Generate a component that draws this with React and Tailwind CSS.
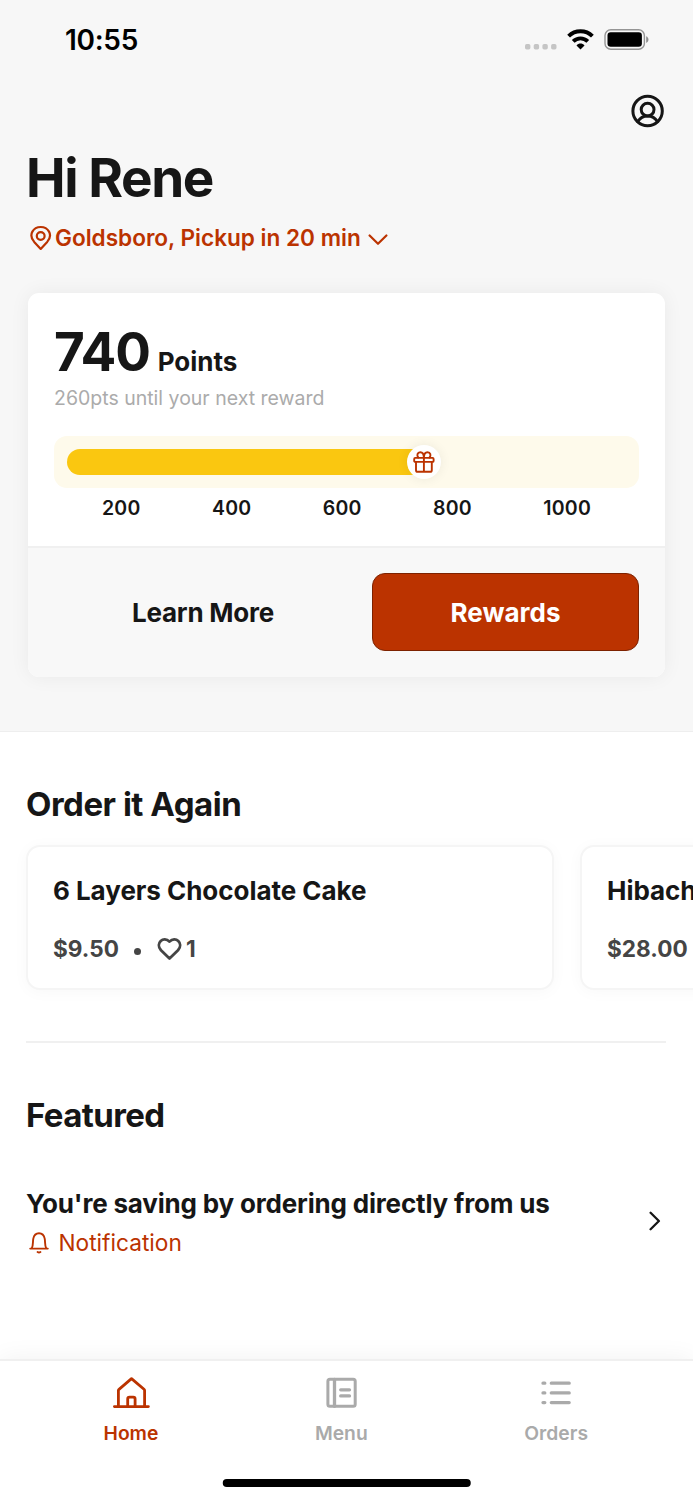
const INK = '#161616';
const BRAND = '#bb3300';

const MILESTONES = [200, 400, 600, 800, 1000];

const RECENT_ITEMS = [
  { name: '6 Layers Chocolate Cake', price: '$9.50', likes: 1 },
  { name: 'Hibachi Chicken', price: '$28.00', likes: 1 },
];

function Icon({ width, height, color, stroke, children, className = '' }) {
  return (
    <svg
      width={width}
      height={height}
      viewBox={`0 0 ${width} ${height}`}
      fill="none"
      stroke={color}
      strokeWidth={stroke}
      strokeLinecap="round"
      strokeLinejoin="round"
      className={`block flex-shrink-0 ${className}`}
    >
      {children}
    </svg>
  );
}

function StatusBar() {
  return (
    <div className="flex h-20 items-center justify-between pl-[65px] pr-[44px]">
      <span className="text-[28px] font-semibold leading-none tracking-[-0.3px] text-black">10:55</span>
      <div className="flex items-center">
        <Icon width={32} height={6} className="mt-[13px]">
          {[0, 8.7, 17.4, 26.1].map((x) => (
            <rect key={x} x={x} y="0" width="5.4" height="5.4" rx="1.7" fill="#c5c5c5" />
          ))}
        </Icon>
        {/* Wifi */}
        <Icon width={27} height={21} color="#000" className="ml-[10px] mt-[-1px]">
          <path d="M1.6 7.1C8.2 0.7 18.8 0.7 25.4 7.1" strokeWidth="4" strokeLinecap="butt" />
          <path d="M6.2 12.4C10.3 8.3 16.7 8.3 20.8 12.4" strokeWidth="3.9" strokeLinecap="butt" />
          <path d="M13.5 20.4L9.5 16.4C11.8 14 15.2 14 17.5 16.4Z" fill="#000" stroke="none" />
        </Icon>
        {/* Battery */}
        <Icon width={45} height={21} className="ml-[10px] mt-[-1px]">
          <rect x="1" y="0.8" width="39.4" height="19.4" rx="5.8" stroke="#959595" strokeWidth="1.4" />
          <rect x="3.5" y="3.2" width="34.4" height="14.6" rx="3.2" fill="#000" />
          <path d="M42.2 7.2C45.2 8.4 45.2 12.8 42.2 14Z" fill="#8e8e8e" />
        </Icon>
      </div>
    </div>
  );
}

function PointsCard() {
  return (
    <div className="ml-[1px] h-[384px] w-[637px] overflow-hidden rounded-[11px] bg-white shadow-[0_0_20px_rgba(0,0,0,0.06)]">
      <div className="h-[255px] border-b-2 border-[#f0f0f0] px-[26px] pt-[27px]">
        <div className="flex h-[64px] items-baseline gap-[8px]">
          <span className="text-[53px] font-bold leading-[64px] tracking-[-1.2px]">740</span>
          <span className="text-[26px] font-bold">Points</span>
        </div>
        <p className="h-[28px] text-[19.5px] leading-[28px] text-[#ababab]">260pts until your next reward</p>
        <div className="mt-[24px] flex h-[52px] items-center rounded-[13px] bg-[#fefaeb] pl-[12.5px]">
          <div className="relative h-[26px] w-[357px] rounded-full bg-[#fac710]">
            <div className="absolute -top-[4px] right-[-17px] flex h-[34px] w-[34px] items-center justify-center rounded-full bg-white shadow-[0_0_12px_rgba(0,0,0,0.07)]">
              <Icon width={22} height={22} color={BRAND} stroke={1.9}>
                <rect x="1.2" y="6.9" width="19.4" height="4" rx="1" />
                <path d="M3 10.9V19.2Q3 20.8 4.6 20.8H17.2Q18.8 20.8 18.8 19.2V10.9M10.9 6.7V20.8" />
                <path d="M10.9 6.5C10.8 3.2 9.4 1.2 7.3 1.2C4.3 1.2 3.5 4.6 5.3 6.5M10.9 6.5C11 3.2 12.4 1.2 14.5 1.2C17.5 1.2 18.3 4.6 16.5 6.5" />
              </Icon>
            </div>
          </div>
        </div>
        <div className="mt-[6px] flex justify-between px-[48px] text-[19.5px] font-semibold leading-[28px] tracking-[0.2px]">
          {MILESTONES.map((value) => (
            <span key={value}>{value}</span>
          ))}
        </div>
      </div>
      <div className="flex h-[129px] items-start bg-[#f8f8f8] px-[26px] pt-[25px] text-[26px]">
        <button className="h-[78px] flex-1 pr-[20px] pt-[1px] font-bold tracking-[-0.22px]">Learn More</button>
        <button className="h-[78px] w-[267px] rounded-[13px] border-[1.5px] border-[#7d2200] bg-[#bb3300] pt-[1px] font-bold text-white">
          Rewards
        </button>
      </div>
    </div>
  );
}

function OrderCard({ item }) {
  return (
    <div className="h-[145px] w-[528px] flex-shrink-0 rounded-[14px] border-2 border-[#f5f5f5] bg-white px-[25px] pt-[27px] shadow-[0_2px_16px_rgba(0,0,0,0.03)]">
      <h3 className="whitespace-nowrap text-[26px] font-bold leading-[34px] tracking-[-0.04px]">{item.name}</h3>
      <div className="mt-[26px] flex h-[30px] items-center text-[22.6px] font-bold leading-[30px] text-[#454545]">
        <span>{item.price}</span>
        <span className="ml-[15px] mt-[4px] h-[7px] w-[7px] rounded-full bg-[#454545]" />
        <Icon width={25} height={24} color="#454545" stroke={2.8} className="ml-[16px]">
          <path d="M12.5 21.4L4 13.2C-2.2 6.2 6.6 -1.7 12.5 4.6C18.4 -1.7 27.2 6.2 21 13.2Z" />
        </Icon>
        <span className="ml-[4px]">{item.likes}</span>
      </div>
    </div>
  );
}

function Tab({ label, active, children }) {
  return (
    <div className={`flex flex-col items-center ${active ? 'text-[#bb3300]' : 'text-[#aaaaaa]'}`}>
      {children}
      <span className="mt-[9px] text-[19.3px] font-semibold leading-[28px]">{label}</span>
    </div>
  );
}

function TabBar() {
  return (
    <nav className="relative h-[141px] border-t-2 border-[#f0f0f0] bg-white pl-[103.5px] pr-[105px] pt-[13px] shadow-[0_0_24px_rgba(0,0,0,0.06)]">
      <div className="flex justify-between">
        <Tab label="Home" active>
          <Icon width={38} height={36} color="currentColor" stroke={2.8}>
            <path d="M2.4 32.6H36.4M6.4 32.6V16.5Q6.4 15.8 7 15.3L19.5 4.6L32 15.3Q32.6 15.8 32.6 16.5V32.6" />
            <path d="M15.7 32.6V25Q15.7 23.2 17.5 23.2H21.3Q23.1 23.2 23.1 25V32.6" />
          </Icon>
        </Tab>
        <Tab label="Menu">
          <Icon width={38} height={36} color="currentColor" stroke={3}>
            <rect x="5.9" y="5.3" width="27.3" height="27" rx="2" />
            <path d="M12.5 5.3V32.3M18.7 15.8H27.5M18.7 21.9H27.5" strokeWidth="3.3" />
          </Icon>
        </Tab>
        <Tab label="Orders">
          <Icon width={38} height={36} color="currentColor" stroke={3.3}>
            <path d="M6 9.2H7.8M6 18.9H7.8M6 28.6H7.8M14.3 9.2H32.2M14.3 18.9H32.2M14.3 28.6H32.2" />
          </Icon>
        </Tab>
      </div>
      <div className="mx-auto h-[8px] w-[248px] translate-x-[0.75px] mt-[31.5px] rounded-full bg-black" />
    </nav>
  );
}

export default function App() {
  return (
    <div className="flex h-[1500px] w-[693px] flex-col overflow-hidden bg-white font-['Inter',sans-serif] text-[#161616]">
      <header className="h-[732px] border-b border-[#eeeeee] bg-[#f7f7f7]">
        <StatusBar />
        <div className="flex justify-end pr-[28px] pt-[14px]">
          <Icon width={34} height={34} color={INK} stroke={3}>
            <circle cx="16.6" cy="17" r="14.7" />
            <circle cx="16.6" cy="15.6" r="6.4" />
            <path d="M6.8 27.6C9 23.9 12.4 21.9 16.6 21.9C20.8 21.9 24.2 23.9 26.4 27.6" />
          </Icon>
        </div>
        <div className="px-[27px]">
          <h1 className="-ml-[1px] mt-[18px] h-[64px] text-[53px] font-bold leading-[64px] tracking-[-1.4px]">Hi Rene</h1>
          <div className="mt-[13px] flex h-[30px] items-center text-[#bb3300]">
            <Icon width={22} height={26} color="currentColor" stroke={2.2} className="ml-[3px]">
              <path d="M10.7 23.9L4.2 16.9C-2.2 9.4 3.6 2 10.7 2C17.8 2 23.6 9.4 17.2 16.9Z" />
              <circle cx="10.7" cy="11" r="3.9" />
            </Icon>
            <span className="ml-[3px] text-[22.58px] font-semibold leading-[30px]">Goldsboro, Pickup in 20 min</span>
            <Icon width={20} height={12} color="currentColor" stroke={2.2} className="ml-[7px] mt-[3px]">
              <path d="M1.6 1.5L10 9.8L18.4 1.5" />
            </Icon>
          </div>
          <div className="mt-[40px]">
            <PointsCard />
          </div>
        </div>
      </header>

      <main className="flex-1 px-[26px]">
        <h2 className="mt-[52px] h-[40px] text-[33px] font-bold leading-[40px] tracking-[-0.48px]">Order it Again</h2>
        <div className="mt-[21px] flex gap-[26px]">
          {RECENT_ITEMS.map((item) => (
            <OrderCard key={item.name} item={item} />
          ))}
        </div>
        <hr className="mt-[51px] w-[640px] border-t-2 border-[#f0f0f0]" />
        <h2 className="mt-[52px] h-[40px] text-[33px] font-bold leading-[40px] tracking-[-0.6px]">Featured</h2>
        <div className="mt-[51px] flex items-center justify-between pr-[6px]">
          <div>
            <h3 className="text-[26px] font-bold leading-[36px] tracking-[-0.18px]">
              You're saving by ordering directly from us
            </h3>
            <div className="mt-[5px] flex h-[32px] items-center text-[#bb3300]">
              <Icon width={21} height={22} color="currentColor" stroke={1.9} className="ml-[3px]">
                <path d="M1.2 16.6H18.8M2.7 16.4C4.5 13.2 3.6 9.8 4.3 6.6C5 3.1 7.2 1.2 10 1.2C12.8 1.2 15 3.1 15.7 6.6C16.4 9.8 15.5 13.2 17.3 16.4" />
                <path d="M8.6 20Q10 21 11.4 20" />
              </Icon>
              <span className="ml-[8.5px] text-[22.7px] leading-[32px]">Notification</span>
            </div>
          </div>
          <Icon width={12} height={20} color={INK} stroke={2.3} className="mb-[4px]">
            <path d="M1.6 1.8L9.9 10L1.6 18.2" />
          </Icon>
        </div>
      </main>

      <TabBar />
    </div>
  );
}
